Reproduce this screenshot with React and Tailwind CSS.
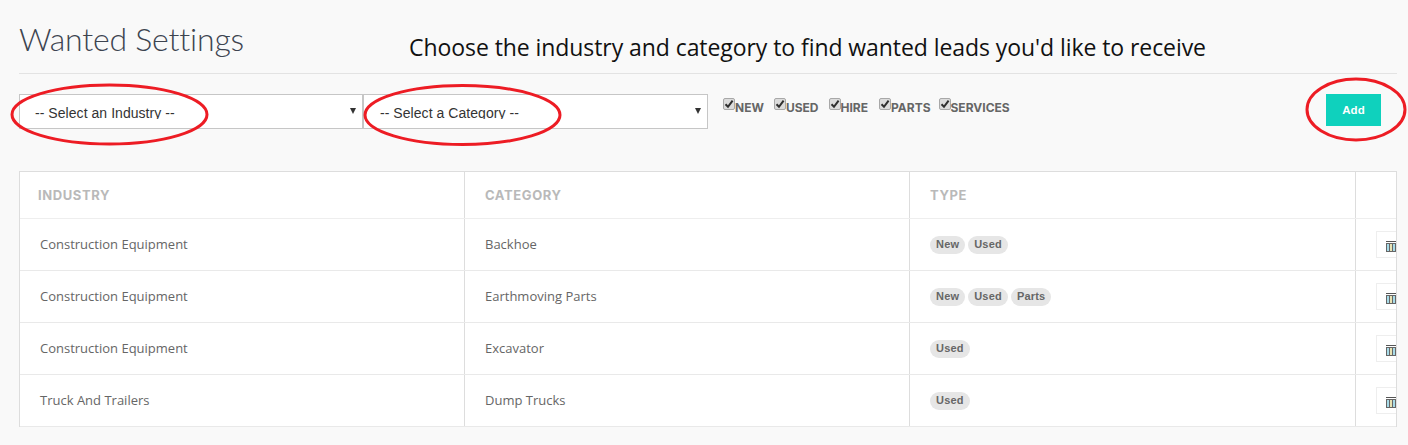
const rows = [
  ["Construction Equipment", "Backhoe", ["New", "Used"]],
  ["Construction Equipment", "Earthmoving Parts", ["New", "Used", "Parts"]],
  ["Construction Equipment", "Excavator", ["Used"]],
  ["Truck And Trailers", "Dump Trucks", ["Used"]],
];

const types = [
  ["NEW", "mr-[10px]"],
  ["USED", "mr-[10px]"],
  ["HIRE", "mr-[11px]"],
  ["PARTS", "mr-[8px]"],
  ["SERVICES", ""],
];

function Check() {
  return (
    <span className="w-[12px] h-[12px] rounded-[2px] border border-[#a8a8a8] bg-[#dcdcdc] flex items-center justify-center shrink-0">
      <svg width="10" height="10" viewBox="0 0 10 10">
        <path d="M1.5 5.2 L4 7.8 L8.6 1.6" fill="none" stroke="#2f2f2f" strokeWidth="2" />
      </svg>
    </span>
  );
}

function Select({ label, className, inset }) {
  return (
    <div className={`h-[35px] bg-white border border-[#c6c6c6] flex items-start relative ${className}`}>
      <div className={`h-[23px] mt-[1px] overflow-hidden pt-[9px] text-[14px] leading-[16px] tracking-[0.05px] text-[#333] font-['Liberation_Sans',sans-serif] ${inset}`}>{label}</div>
      <svg className="absolute top-[13px] right-[6px]" width="6" height="6" viewBox="0 0 6 6">
        <path d="M0 0 H6 L3 6 Z" fill="#333" />
      </svg>
    </div>
  );
}

function Trash() {
  return (
    <svg width="13" height="11" viewBox="0 0 13 11" className="shrink-0">
      <path d="M0 0.5 H13" stroke="#555" strokeWidth="1" />
      <rect x="0" y="2" width="11" height="9" fill="#666" />
      <rect x="1" y="3" width="2" height="7" fill="#a8dbe8" />
      <rect x="4" y="3" width="2" height="7" fill="#e8e3b4" />
      <rect x="7" y="3" width="2" height="7" fill="#a8dbe8" />
    </svg>
  );
}

const headCell = "h-[46px] pt-[1px] flex items-center text-[13px] font-bold tracking-[0.6px] text-[#b9b9b9] font-['Inter',sans-serif]";

export default function App() {
  return (
    <div className="relative w-[1408px] h-[445px] overflow-hidden bg-[#f9f9f9] pl-[19px] pr-[11px] font-['Open_Sans',sans-serif]">
      <div className="h-[74px] border-b border-[#e3e3e3] flex items-start">
        <h1 className="w-[390px] mt-[17px] text-[32px] leading-[44px] tracking-[-0.2px] font-light text-[#3d4450] font-['Lato',sans-serif]">Wanted Settings</h1>
        <p className="mt-[30px] text-[23px] leading-[34px] tracking-[-0.07px] text-[#111] whitespace-nowrap font-['Open_Sans',sans-serif]">Choose the industry and category to find wanted leads you'd like to receive</p>
      </div>

      <div className="flex items-start mt-[20px] h-[77px]">
        <Select label="-- Select an Industry --" className="w-[344px]" inset="pl-[15px]" />
        <Select label="-- Select a Category --" className="w-[345px]" inset="pl-[16px]" />
        <div className="flex items-start ml-[15px] mt-[4px]">
          {types.map(([t, m]) => (
            <label key={t} className={`flex items-start ${m}`}>
              <Check />
              <span className="mt-[3px] text-[12px] leading-[14px] font-bold text-[#666] font-['Inter',sans-serif]">{t}</span>
            </label>
          ))}
        </div>
        <button className="ml-auto mr-[16px] w-[55px] h-[32px] pt-[1px] bg-[#0fd1bd] text-white text-[11.5px] font-bold font-['Liberation_Sans',sans-serif]">Add</button>
      </div>

      <div className="bg-white border border-[#dddddd] border-b-0 h-[256px] overflow-hidden">
        <div className="grid grid-cols-[445px_445px_446px_1fr] border-b border-[#eeeeee]">
          <div className={`${headCell} pl-[18px] border-r border-[#dddddd]`}>INDUSTRY</div>
          <div className={`${headCell} pl-[20px] border-r border-[#dddddd]`}>CATEGORY</div>
          <div className={`${headCell} pl-[20px] border-r border-[#dddddd]`}>TYPE</div>
          <div className="h-[46px]" />
        </div>
        {rows.map(([ind, cat, tags], i) => (
          <div key={i} className="grid grid-cols-[445px_445px_446px_1fr] h-[52px] border-b border-[#e9e9e9] text-[13px] text-[#666]">
            <div className="pl-[20px] pt-[1px] flex items-center border-r border-[#dddddd]">{ind}</div>
            <div className="pl-[20px] pt-[1px] flex items-center border-r border-[#dddddd]">{cat}</div>
            <div className="pl-[20px] flex items-center gap-[3px] border-r border-[#dddddd]">
              {tags.map((t) => (
                <span key={t} className="h-[18px] px-[6px] rounded-full bg-[#e6e6e6] text-[#666] text-[11px] font-bold leading-[17px] font-['Liberation_Sans',sans-serif] tracking-[0.2px]">{t}</span>
              ))}
            </div>
            <div className="flex items-center pl-[20px] overflow-hidden">
              <div className="w-[40px] h-[27px] shrink-0 bg-white border border-[#eeeeee] flex items-start pl-[9px] pt-[9px]">
                <Trash />
              </div>
            </div>
          </div>
        ))}
      </div>

      <svg className="absolute inset-0 pointer-events-none" width="1408" height="445" viewBox="0 0 1408 445" fill="none" stroke="#ed1c24" strokeWidth="3">
        <ellipse cx="109.5" cy="114.5" rx="97.5" ry="29.5" />
        <ellipse cx="462.5" cy="115" rx="97.5" ry="29.5" />
        <ellipse cx="1356" cy="109.5" rx="49" ry="30.5" />
      </svg>
    </div>
  );
}
